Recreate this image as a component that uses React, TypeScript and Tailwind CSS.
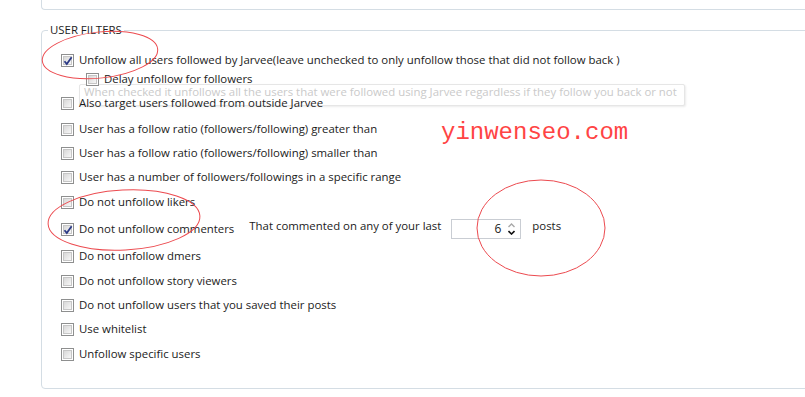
import React from 'react';

type Row = {
  label: string;
  checked?: boolean;
  indent?: boolean;
  gap: string;
  extra?: boolean;
};

const rows: Row[] = [
  { label: 'Unfollow all users followed by Jarvee(leave unchecked to only unfollow those that did not follow back )', checked: true, gap: 'mt-0' },
  { label: 'Delay unfollow for followers', indent: true, gap: 'mt-[-1px]' },
  { label: 'Also target users followed from outside Jarvee', gap: 'mt-[4px]' },
  { label: 'User has a follow ratio (followers/following) greater than', gap: 'mt-[6px]' },
  { label: 'User has a follow ratio (followers/following) smaller than', gap: 'mt-[4px]' },
  { label: 'User has a number of followers/followings in a specific range', gap: 'mt-[4px]' },
  { label: 'Do not unfollow likers', gap: 'mt-[5px]' },
  { label: 'Do not unfollow commenters', checked: true, gap: 'mt-[7px]', extra: true },
  { label: 'Do not unfollow dmers', gap: 'mt-[7px]' },
  { label: 'Do not unfollow story viewers', gap: 'mt-[5px]' },
  { label: 'Do not unfollow users that you saved their posts', gap: 'mt-[4px]' },
  { label: 'Use whitelist', gap: 'mt-[4px]' },
  { label: 'Unfollow specific users', gap: 'mt-[5px]' },
];

const CheckBox = ({ checked }: { checked?: boolean }) => (
  <span className="relative flex h-[13px] w-[13px] shrink-0 items-center justify-center border border-[#8e8f8f] bg-white">
    <span className="h-[9px] w-[9px] border border-[#c6c6c6] bg-gradient-to-br from-[#d8d8d8] to-[#f7f7f7]" />
    {checked && (
      <svg className="absolute left-[1px] top-[1px]" width="10" height="10" viewBox="0 0 10 10">
        <path d="M1.5 5.2 L3.8 8 L8.6 1.2" fill="none" stroke="#2b3a86" strokeWidth="1.8" />
      </svg>
    )}
  </span>
);

const Spinner = () => (
  <span className="flex h-[20px] w-[70px] items-center justify-end border border-[#c9cdd3] bg-white pr-[5px]">
    <span className="mr-[7px] text-[12px] text-[#1b1b1b]">6</span>
    <svg width="7" height="12" viewBox="0 0 7 12">
      <path d="M0.5 4 L3.5 1 L6.5 4" fill="none" stroke="#a8a8a8" strokeWidth="1.4" />
      <path d="M0.5 8 L3.5 11 L6.5 8" fill="none" stroke="#111" strokeWidth="1.6" />
    </svg>
  </span>
);

export default function App() {
  return (
    <div
      className="relative h-[397px] w-[805px] overflow-hidden bg-white text-[11.4px] text-[#1b1b1b]"
      style={{ fontFamily: '"Open Sans", "Noto Sans", sans-serif' }}
    >
      <div className="ml-[41px] h-[10px] w-[770px] rounded-bl-[4px] border-b border-l border-[#d4dde4]" />

      {/* fading hover tooltip, drawn under the rows */}
      <div className="absolute left-[79px] top-[84px] h-[22px] w-[606px] whitespace-nowrap rounded-[2px] border border-[#e6e6e6] bg-white pl-[4px] text-[11.4px] leading-[13px] text-[#cacaca] shadow-[1px_1px_2px_rgba(0,0,0,0.08)]">
        When checked it unfollows all the users that were followed using Jarvee regardless if they follow you back or not
      </div>

      <fieldset className="ml-[41px] mt-[13px] h-[366px] w-[770px] rounded-[4px] border border-[#d4dde4] pl-[19px]">
        <legend className="ml-[-13px] px-[2px] text-[11.4px] leading-[14px] text-[#1e1e1e]">USER FILTERS</legend>
        <div className="relative z-10 flex flex-col pt-[13px]">
          {rows.map((r) => (
            <div key={r.label} className={`flex h-[20px] items-center ${r.gap} ${r.indent ? 'pl-[25px]' : ''}`}>
              <CheckBox checked={r.checked} />
              <span className="ml-[5px] whitespace-nowrap">{r.label}</span>
              {r.extra && (
                <div className="ml-[15px] flex items-center">
                  <span className="mt-[-6px] whitespace-nowrap">That commented on any of your last</span>
                  <span className="ml-[10px]"><Spinner /></span>
                  <span className="ml-[11px] mt-[-6px]">posts</span>
                </div>
              )}
            </div>
          ))}
        </div>
      </fieldset>

      {/* watermark */}
      <div
        className="absolute left-[441px] top-[119px] text-[24px] leading-[28px] text-[#ff4444]"
        style={{ fontFamily: '"Liberation Mono", monospace' }}
      >
        yinwenseo.com
      </div>

      {/* annotation rings */}
      <svg className="pointer-events-none absolute left-0 top-0 z-20" width="805" height="397">
        <ellipse cx="100" cy="55" rx="58" ry="23" transform="rotate(-6 100 55)" fill="none" stroke="#ec4a4f" strokeWidth="1" />
        <ellipse cx="124" cy="220" rx="76" ry="30" transform="rotate(-3 124 220)" fill="none" stroke="#ec4a4f" strokeWidth="1" />
        <ellipse cx="541" cy="228" rx="64" ry="48" fill="none" stroke="#ec4a4f" strokeWidth="1" />
      </svg>
    </div>
  );
}
